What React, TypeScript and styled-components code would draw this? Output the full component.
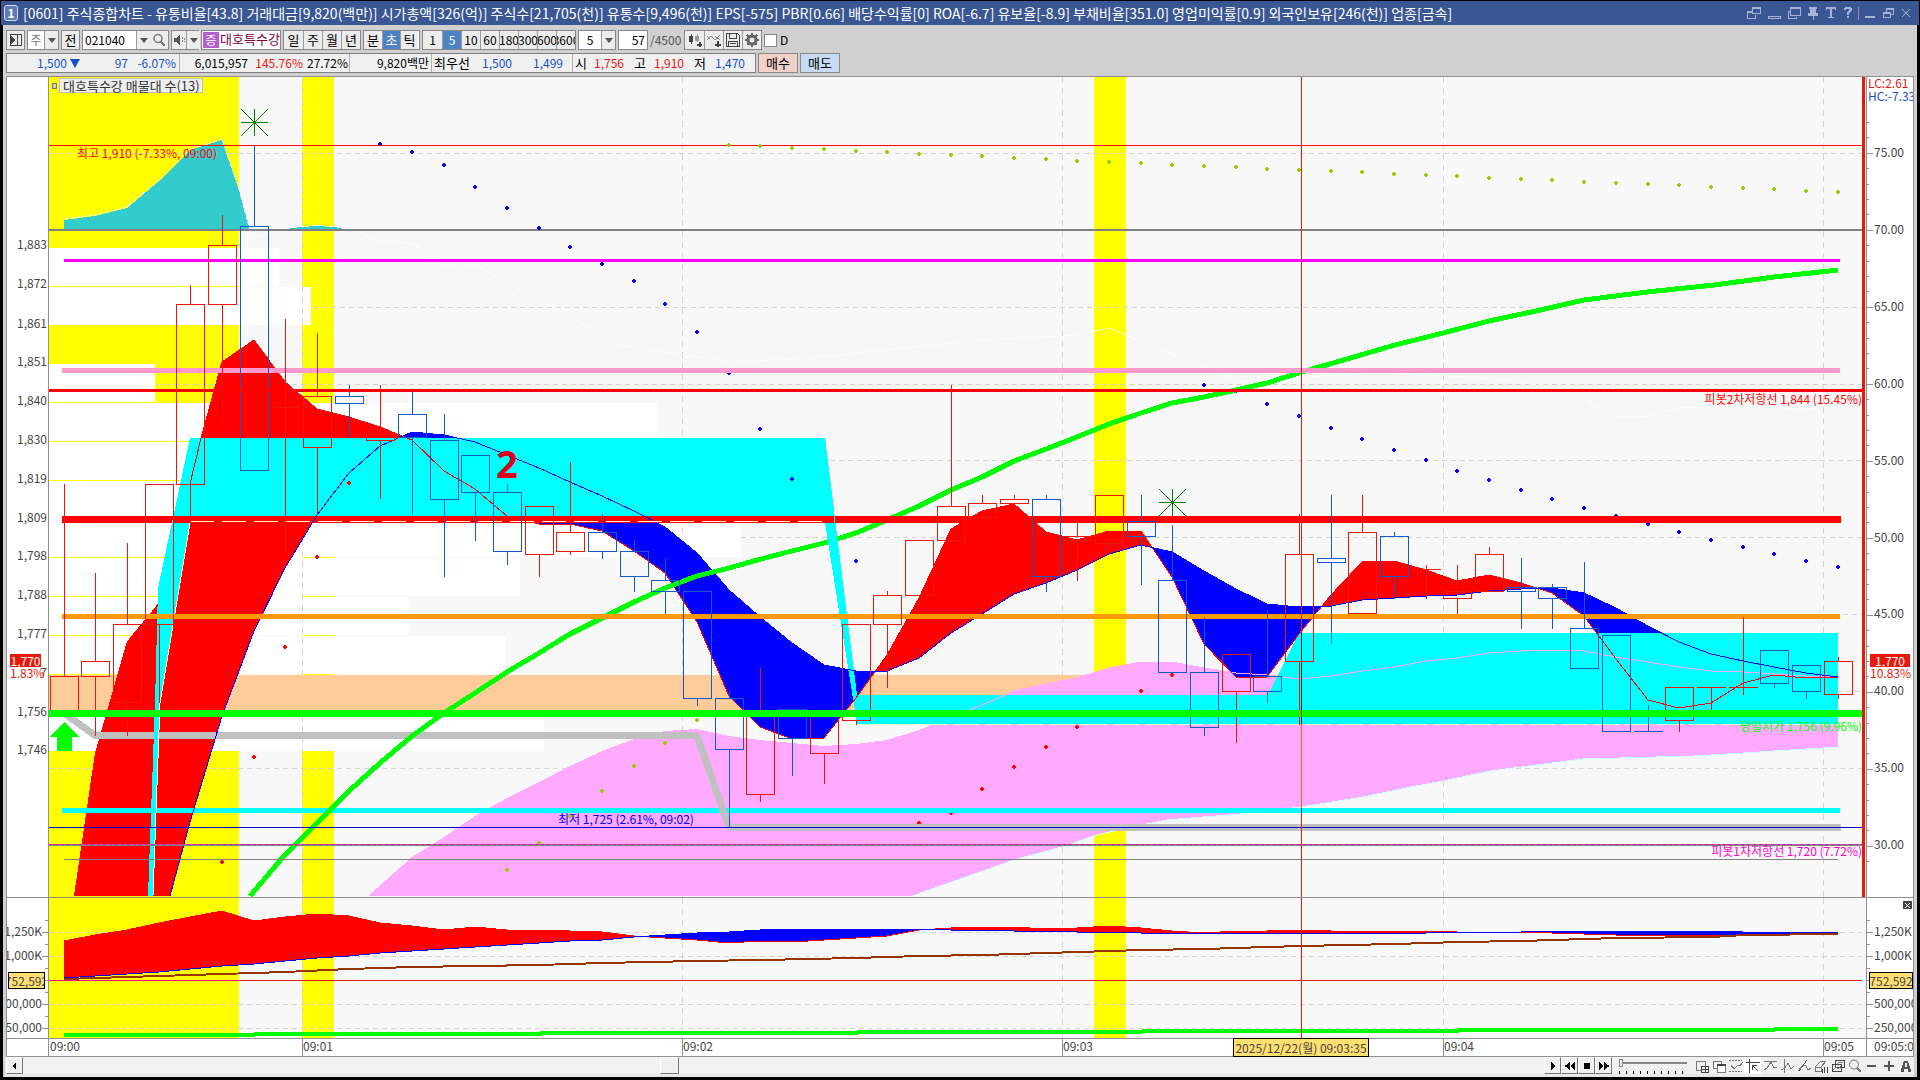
import React from "react";
import styled, { createGlobalStyle, css } from "styled-components";

const FONT = `"Noto Sans CJK KR", "Liberation Sans", sans-serif`;

const GlobalStyle = createGlobalStyle`
  *, *::before, *::after { box-sizing: border-box; }
  html, body { margin: 0; padding: 0; background: #000; }
  body, button, input, select { font-family: ${FONT}; font-size: 12px; line-height: 16px; }
`;

/* ------------------------------------------------------------------ */
/* Window                                                              */
/* ------------------------------------------------------------------ */

const Desktop = styled.div`
  display: flex;
  flex-direction: column;
  height: 100vh;
  min-height: 480px;
  padding: 1px 1px 3px;
  background: #000;
  overflow: hidden;
`;

const TitleBar = styled.header`
  display: flex;
  align-items: center;
  flex: none;
  height: 24px;
  padding: 0 5px 0 3px;
  background: #3b5793;
  color: #fff;
  white-space: nowrap;
`;

const ScreenBadge = styled.span`
  display: flex;
  align-items: center;
  justify-content: center;
  flex: none;
  width: 14px;
  height: 16px;
  margin-right: 5px;
  border: 1px solid #d3dcf0;
  border-radius: 3px;
  background: #5f79b3;
  font-weight: bold;
`;

const TitleText = styled.h1`
  flex: 1;
  margin: 0;
  overflow: hidden;
  font-size: 14px;
  font-weight: normal;
  line-height: 20px;
`;

const WindowButtons = styled.div`
  display: flex;
  align-items: center;
  gap: 2px;
  color: #a4b2d4;
`;

const WindowButton = styled.button<{ $w: number }>`
  display: flex;
  align-items: center;
  justify-content: center;
  width: ${(p) => p.$w}px;
  height: 18px;
  padding: 0;
  border: 0;
  background: none;
  color: inherit;
`;

const WindowDivider = styled.span`
  width: 1px;
  height: 13px;
  margin: 0 1px;
  background: #8891a8;
`;

const Body = styled.main`
  display: flex;
  flex-direction: column;
  flex: 1;
  min-height: 0;
  margin: 0 2px;
  padding: 5px 3px 0;
  background: #d0d0d0;
`;

/* ------------------------------------------------------------------ */
/* Toolbar                                                             */
/* ------------------------------------------------------------------ */

const Toolbar = styled.div`
  display: flex;
  flex: none;
  gap: 2px;
  height: 20px;
  white-space: nowrap;
`;

const Group = styled.div<{ $w?: number }>`
  display: flex;
  flex: none;
  width: ${(p) => (p.$w ? `${p.$w}px` : "auto")};
  border: 1px solid #888;
  background: #fff;
`;

const ToolButton = styled.button<{ $on?: boolean; $w?: number; $large?: boolean }>`
  display: flex;
  align-items: center;
  justify-content: center;
  flex: none;
  width: ${(p) => p.$w ?? 19}px;
  padding: 0;
  border: 0;
  background: ${(p) => (p.$on ? "#4d82c4" : "#ececec")};
  color: ${(p) => (p.$on ? "#fff" : "#000")};
  font-size: ${(p) => (p.$large ? 13 : 12)}px;
  overflow: hidden;
  & + & { border-left: 1px solid #999; }
`;

const Arrow = styled.span`
  display: flex;
  align-items: center;
  justify-content: center;
  flex: none;
  width: 14px;
  border-left: 1px solid #999;
  background: #ececec;
  pointer-events: none;
  &::before {
    content: "";
    border: 4px solid transparent;
    border-top: 5px solid #555;
    border-bottom: 0;
  }
`;

const Select = styled.select<{ $muted?: boolean }>`
  flex: 1;
  min-width: 0;
  padding: 0 2px;
  border: 0;
  outline: 0;
  appearance: none;
  background: transparent;
  color: ${(p) => (p.$muted ? "#777" : "#000")};
  text-align: center;
`;

const TextBox = styled.input<{ $right?: boolean }>`
  flex: 1;
  min-width: 0;
  padding: 0 2px;
  border: 0;
  outline: 0;
  background: transparent;
  color: #000;
  text-align: ${(p) => (p.$right ? "right" : "left")};
`;

const MarginMark = styled.span`
  flex: none;
  width: 16px;
  margin: 1px;
  background: #b35fd0;
  color: #fff;
  text-align: center;
`;

const StockName = styled.span`
  flex: 1;
  color: #800040;
  font-size: 13px;
  text-align: center;
`;

const Total = styled.span`
  width: 32px;
  color: #555;
  line-height: 20px;
`;

const CheckLabel = styled.label`
  display: flex;
  align-items: center;
  gap: 3px;
`;

const Check = styled.input`
  width: 13px;
  height: 13px;
  margin: 0;
  border: 1px solid #888;
  appearance: none;
  background: #fff;
  &:checked { background: #4d82c4; }
`;

/* ------------------------------------------------------------------ */
/* Quote line                                                          */
/* ------------------------------------------------------------------ */

const QuoteLine = styled.div`
  display: flex;
  flex: none;
  gap: 2px;
  height: 20px;
  margin: 3px 0;
  white-space: nowrap;
`;

const Quotes = styled.div`
  display: flex;
  border: 1px solid #808080;
  background: #f0f0f0;
`;

const QuoteCell = styled.div<{ $w: number }>`
  display: flex;
  align-items: center;
  width: ${(p) => p.$w}px;
  & + & { border-left: 1px solid #b0b0b0; }
`;

const tones = { up: "#e8180c", down: "#1450c8", flat: "#000" };

const Num = styled.span<{ $w: number; $tone?: keyof typeof tones }>`
  width: ${(p) => p.$w}px;
  color: ${(p) => tones[p.$tone ?? "flat"]};
  text-align: right;
`;

const Cap = styled.span`
  width: 40px;
  padding-left: 2px;
  font-size: 13px;
`;

const Side = styled(Cap)<{ $lead?: boolean }>`
  width: ${(p) => (p.$lead ? 14 : 22)}px;
  text-align: right;
`;

const DownMark = styled.span`
  width: 0;
  margin: 0 2px 0 3px;
  border: 5px solid transparent;
  border-top: 9px solid #1450c8;
  border-bottom: 0;
`;

const OrderButton = styled.button<{ $buy?: boolean }>`
  width: 40px;
  padding: 0;
  border: 1px solid #888;
  background: ${(p) => (p.$buy ? "#f4d0cb" : "#c5dcf2")};
  color: #000;
  font-size: 13px;
`;

/* ------------------------------------------------------------------ */
/* Chart panes                                                         */
/* ------------------------------------------------------------------ */

const ChartFrame = styled.section`
  display: grid;
  grid-template-columns: 42px minmax(0, 1fr) 47px;
  grid-template-rows: minmax(0, 821fr) minmax(0, 141fr) 18px;
  flex: 1;
  min-height: 0;
  border: solid #909090;
  border-width: 1px 1px 0;
  background: #fff;
`;

const Pane = styled.div<{ $plot?: boolean; $side?: "left" | "right" }>`
  position: relative;
  min-width: 0;
  min-height: 0;
  border-bottom: 1px solid #909090;
  background: ${(p) => (p.$plot ? "#f8f8f8" : "#fff")};
  ${(p) => p.$side === "left" && css`border-right: 1px solid #909090;`}
  ${(p) => p.$side === "right" && css`border-left: 1px solid #909090;`}
`;

const Drawing = styled.svg`
  display: block;
  width: 100%;
  height: 100%;
  font-family: ${FONT};
  font-size: 12px;
`;

const Legend = styled.div`
  position: absolute;
  top: 1px;
  left: 3px;
  display: flex;
  align-items: center;
  gap: 2px;
  color: #333;
  font-size: 13px;
  &::before {
    content: "";
    width: 5px;
    height: 6px;
    border: 1px solid #777;
    background: #ccc;
  }
  span {
    width: 144px;
    height: 15px;
    padding-left: 3px;
    border: 1px solid #c0c0c0;
    background: #efefef;
    line-height: 13px;
    white-space: nowrap;
  }
`;

const PriceTag = styled.div<{ $w: number }>`
  position: absolute;
  top: ${((654 - 77) / 820) * 100}%;
  left: 3px;
  width: ${(p) => p.$w}px;
  color: #e8180c;
  line-height: 12px;
  text-align: center;
  b {
    display: block;
    background: #e8180c;
    color: #fff;
    font-weight: normal;
    line-height: 13px;
  }
`;

const YellowTag = styled.div`
  position: absolute;
  display: flex;
  align-items: center;
  justify-content: center;
  border: 1px solid #000;
  background: #ffdf70;
  color: #444;
  white-space: nowrap;
`;

const ValueTag = styled(YellowTag)<{ $left: number; $w: number }>`
  top: ${((972 - 898) / 140) * 100}%;
  left: ${(p) => p.$left}px;
  width: ${(p) => p.$w}px;
  height: 17px;
  overflow: hidden;
`;

const TimeTag = styled(YellowTag)`
  top: -1px;
  left: ${((1233 - 49) / 1817) * 100}%;
  width: 136px;
  height: 19px;
`;

const PaneClose = styled.button`
  position: absolute;
  top: 3px;
  right: 1px;
  display: flex;
  align-items: center;
  justify-content: center;
  width: 9px;
  height: 8px;
  padding: 0;
  border: 0;
  background: #444;
  color: #fff;
`;

/* ------------------------------------------------------------------ */
/* Scroll strip                                                        */
/* ------------------------------------------------------------------ */

const BottomBar = styled.footer`
  display: flex;
  align-items: stretch;
  flex: none;
  height: 20px;
  margin-left: -1px;
  padding: 0 0 3px 1px;
  background: #e8e8e8;
`;

const Track = styled.div`
  display: flex;
  flex: 1;
  background: #f2f2f2;
`;

const Spacer = styled.span<{ $grow: number }>`
  flex: ${(p) => p.$grow} 1 0;
`;

const Raised = styled.button<{ $w?: number }>`
  display: flex;
  align-items: center;
  justify-content: center;
  flex: none;
  width: ${(p) => p.$w ?? 17}px;
  padding: 0;
  border: 1px solid;
  border-color: #fff #777 #777 #fff;
  background: #f0f0f0;
  color: #000;
`;

const SpeedBox = styled.div`
  width: 81px;
  padding: 2px 6px 0 7px;
  background: #f0f0f0;
`;

const Speed = styled.input`
  display: block;
  width: 100%;
  height: 8px;
  margin: 0;
  appearance: none;
  background: linear-gradient(#888, #888) 0 3px / 100% 2px no-repeat;
  &::-webkit-slider-thumb {
    width: 4px;
    height: 8px;
    appearance: none;
    border: 1px solid #888;
    background: #f0f0f0;
  }
`;

const SpeedTicks = styled.div`
  height: 3px;
  margin-top: 4px;
  background: repeating-linear-gradient(90deg, #000 0 1px, transparent 1px 7px);
`;

const ToolIcon = styled.button<{ $on?: boolean }>`
  display: flex;
  align-items: center;
  justify-content: center;
  flex: none;
  width: 17px;
  padding: 0;
  border: 0;
  background: ${(p) => (p.$on ? "#fff" : "#f0f0f0")};
  color: #777;
`;

/* ------------------------------------------------------------------ */
/* Series data                                                         */
/* ------------------------------------------------------------------ */

type Pt = [number, number];

const barX = (i: number) => Math.floor(64 + 31.68 * i);
const series = (from: number, ys: number[]): Pt[] => ys.map((y, k) => [barX(from + k), y]);
const str = (pts: Pt[]) => pts.map((p) => p.join(",")).join(" ");

// [r = rise / b = fall, body top, body bottom, high, low]
const candles: ["r" | "b", number, number, number, number][] = [
  ["r", 676, 712, 484, 712], ["r", 661, 676, 573, 736], ["r", 624, 702, 543, 736],
  ["r", 484, 624, 484, 703], ["r", 304, 484, 285, 522], ["r", 245, 304, 215, 422],
  ["b", 226, 470, 145, 470], ["r", 407, 407, 319, 552], ["r", 396, 447, 333, 515],
  ["b", 396, 403, 385, 438], ["r", 433, 440, 385, 499], ["b", 414, 437, 392, 515],
  ["b", 440, 499, 414, 577], ["b", 455, 492, 455, 541], ["b", 492, 551, 484, 565],
  ["r", 506, 554, 506, 577], ["r", 532, 551, 462, 555], ["b", 532, 551, 514, 559],
  ["b", 551, 576, 540, 592], ["b", 580, 591, 558, 614], ["b", 591, 698, 591, 706],
  ["b", 698, 749, 691, 827], ["r", 712, 794, 668, 802], ["b", 709, 738, 709, 776],
  ["r", 712, 753, 712, 784], ["r", 624, 720, 624, 725], ["r", 595, 624, 591, 688],
  ["r", 540, 595, 540, 595], ["r", 506, 540, 385, 540], ["r", 503, 517, 495, 552],
  ["r", 499, 503, 495, 522], ["b", 499, 576, 495, 592], ["r", 536, 540, 517, 581],
  ["r", 495, 543, 495, 552], ["b", 521, 536, 495, 585], ["b", 580, 672, 525, 672],
  ["b", 672, 727, 617, 736], ["r", 654, 691, 654, 743], ["b", 676, 691, 610, 703],
  ["r", 554, 661, 514, 725], ["b", 558, 562, 495, 644], ["r", 532, 613, 495, 613],
  ["b", 536, 576, 532, 599], ["r", 569, 569, 565, 599], ["r", 591, 598, 565, 614],
  ["r", 554, 591, 547, 591], ["b", 587, 591, 558, 629], ["b", 587, 598, 584, 629],
  ["b", 628, 668, 562, 668], ["b", 635, 731, 635, 731], ["b", 731, 731, 705, 731],
  ["r", 687, 720, 687, 732], ["r", 687, 687, 687, 710], ["r", 687, 687, 617, 695],
  ["b", 650, 683, 650, 688], ["b", 665, 691, 665, 699], ["r", 661, 694, 657, 699],
];

const fast: Pt[] = [
  [74, 896], [95, 753], [127, 641], [159, 602], [190, 484], [201, 438], [222, 362], [254, 340],
  [285, 382], [317, 409], [349, 417], [380, 427], [412, 440], [444, 471], [475, 489], [507, 516],
  [539, 524], ...series(16, [524, 531, 551, 573, 622, 696, 727, 739, 738, 698, 655, 598, 529, 511,
    504, 532, 540, 531, 531, 577, 644, 677, 677, 634, 595, 562, 561, 570, 581, 575, 583, 593, 616,
    659, 700, 708, 703, 683, 675, 678, 677]),
];

const slow: Pt[] = [
  [170, 896], [190, 822], [222, 716], [254, 631], [285, 568], [317, 515], [349, 473], [380, 446],
  [412, 432], [444, 435], [475, 442], [507, 455], [539, 468],
  ...series(16, [482, 496, 511, 527, 553, 590, 617, 643, 665, 671, 671, 658, 633, 614, 594, 583,
    570, 554, 545, 552, 571, 589, 604, 607, 606, 600, 598, 596, 595, 591, 589, 588, 593, 608, 626,
    642, 654, 661, 667, 673, 677]),
];

const pinkTop: Pt[] = [
  [368, 896], [412, 857],
  ...series(12, [837, 816, 798, 782, 766, 751, 739, 731, 729, 736, 740, 743, 746, 744, 740, 730,
    717, 705, 691, 684, 678, 668, 662, 662, 668, 673, 675, 679, 676, 671, 667, 661, 658, 653, 651,
    650, 651, 657, 662, 667, 671, 672, 674, 676, 677]),
];

const pinkBottom: Pt[] = [
  [1838, 747], [1806, 749], [1743, 753], [1693, 756], [1583, 759], [1552, 763], [1490, 771],
  [1443, 781], [1411, 787], [1363, 797], [1301, 807], [1240, 814], [1167, 820], [1126, 828],
  [1097, 835], [1062, 847], [1017, 859], [912, 896],
];

const cyanCloud: Pt[] = [
  [148, 896], [155, 703], [158, 588], [190, 438], [825, 438], [857, 695], [1268, 695], [1299, 633],
  [1838, 633], [1838, 724], [857, 724], [825, 523], [190, 523], [160, 703], [153, 896],
];

const greenCurve: Pt[] = [
  [250, 896], [283, 857], [317, 823], [349, 791], [380, 763], [412, 736], [444, 713], [475, 693],
  [507, 672], [539, 653], [570, 634], [602, 618], [634, 602], [665, 588], [697, 576], [729, 568],
  [761, 559], [792, 551], [824, 543], [856, 533], [887, 520], [919, 506], [951, 490], [982, 477],
  [1014, 461], [1046, 449], [1077, 437], [1109, 424], [1141, 413], [1172, 403], [1204, 397],
  [1236, 390], [1267, 383], [1302, 372], [1347, 359], [1395, 345], [1443, 333], [1489, 321],
  [1536, 311], [1584, 300], [1647, 292], [1714, 285], [1774, 277], [1838, 270],
];

const tealHill: Pt[] = [
  [64, 230], [64, 220], [95, 216], [127, 208], [159, 181], [190, 150], [222, 140], [239, 190], [250, 230],
];
const tealRipple: Pt[] = [[280, 230], [300, 227], [317, 226], [335, 227], [349, 230]];

const whiteDash: Pt[] = [
  [64, 219], [95, 215], [127, 207], [159, 180], [190, 149], [222, 139], [239, 189], [252, 238],
  [280, 230], [317, 225], [349, 229], [380, 241], [412, 243], [444, 266], [475, 265], [540, 300],
  [620, 345], [730, 362], [810, 358], [980, 340], [1077, 335], [1109, 328], [1150, 345],
  [1240, 382], [1380, 372], [1514, 380], [1570, 392], [1617, 416], [1649, 416], [1679, 408],
  [1775, 407], [1806, 410], [1838, 405],
];

const blueDots: Pt[] = [
  ...series(10, [144, 152, 165, 187, 208, 228, 247, 264, 281, 304, 332, 373, 429, 479]),
  [856, 561],
  ...series(36, [385, 391, 404, 416, 428, 439, 450, 460, 471, 480, 490, 499, 508, 516, 524, 532,
    540, 547, 554, 561, 567]),
];
const redDots: Pt[] = [
  ...series(5, [862, 757, 647, 557, 483]),
  ...series(27, [823, 813, 789, 767, 747, 727, 709, 691, 675]),
];
const oliveDots: Pt[] = [
  ...series(14, [870, 843, 816, 791, 766, 743, 720]),
  ...Array.from({ length: 36 }, (_, k): Pt => {
    const x = barX(21 + k);
    return [x, Math.round(x < 1109 ? 145 + ((x - 729) * 17) / 380 : 162 + ((x - 1109) * 30) / 729)];
  }),
];

// Right end of each volume-at-price band, top to bottom; 49 means no bar.
const profileEnds = [279, 311, 49, 155, 657, 800, 790, 741, 520, 409, 506, 49, 544];

const timeMarks: [number, string][] = [
  [49, "09:00"], [302, "09:01"], [682, "09:02"], [1062, "09:03"], [1443, "09:04"], [1823, "09:05"],
];

const subFast: Pt[] = [
  ...series(0, [941, 935, 930, 923, 917, 911, 921, 917, 914, 916, 923, 926, 930, 927, 930, 930, 931,
    932, 936, 938, 940, 943, 941, 942, 940, 938, 936, 930, 928, 927, 927, 929, 928, 926, 928, 931,
    933, 931, 931, 930, 931, 931, 931, 931, 932, 932, 932, 933, 934, 935, 935, 935, 935, 935, 935,
    934, 933]),
];
const subSlow: Pt[] = [
  ...series(0, [978, 976, 974, 972, 969, 966, 964, 961, 958, 956, 953, 951, 949, 947, 945, 943, 941,
    940, 937, 935, 933, 932, 930, 929, 929, 929, 929, 929, 930, 930, 931, 931, 932, 932, 933, 933,
    933, 933, 933, 933, 933, 933, 933, 933, 932, 932, 932, 931, 931, 931, 931, 931, 931, 932, 932,
    932, 932]),
];
const subBrown: Pt[] = [
  [64, 979], [159, 976], [222, 974], [285, 972], [349, 969], [412, 967], [475, 966], [539, 965],
  [602, 963], [697, 961], [762, 960], [855, 958], [920, 956], [983, 955], [1078, 952], [1142, 950],
  [1205, 949], [1267, 947], [1301, 946], [1395, 944], [1459, 942], [1521, 941], [1585, 939],
  [1618, 938], [1712, 937], [1744, 935], [1838, 934],
];
const subGreen: Pt[] = [
  [64, 1035], [254, 1035], [255, 1034], [540, 1034], [541, 1033], [857, 1033], [858, 1032],
  [1142, 1032], [1143, 1031], [1458, 1031], [1459, 1030], [1774, 1030], [1775, 1029], [1838, 1029],
];

/* ------------------------------------------------------------------ */
/* Chart drawing                                                       */
/* ------------------------------------------------------------------ */

const valueAt = (line: Pt[], x: number) => {
  for (let k = 1; k < line.length; k++) {
    if (x <= line[k][0]) {
      const [x0, y0] = line[k - 1];
      const [x1, y1] = line[k];
      return y0 + ((x - x0) / (x1 - x0)) * (y1 - y0);
    }
  }
  return line[line.length - 1][1];
};

/** Fills the space between two lines: red where `a` is above `b`, blue where it is below. */
function Ribbon({ a, b, floor }: { a: Pt[]; b: Pt[]; floor: number }) {
  const start = Math.min(a[0][0], b[0][0]);
  const end = a[a.length - 1][0];
  const yb = (x: number) => (x < b[0][0] ? floor : valueAt(b, x));
  const runs: { up: boolean; top: Pt[]; bottom: Pt[] }[] = [];
  for (let x = start; x <= end; x++) {
    const ya = valueAt(a, x);
    const ys = yb(x);
    const up = ya <= ys;
    let run = runs[runs.length - 1];
    if (!run || run.up !== up) {
      run = { up, top: [], bottom: [] };
      runs.push(run);
    }
    run.top.push([x, Math.round(ya)]);
    run.bottom.push([x, Math.round(ys)]);
  }
  return (
    <>
      {runs.map((r, k) => (
        <polygon key={k} points={str([...r.top, ...r.bottom.reverse()])} fill={r.up ? "#f00" : "#00f"} />
      ))}
    </>
  );
}

const Dots = ({ pts, color }: { pts: Pt[]; color: string }) => (
  <g fill={color}>
    {pts.map(([x, y]) => (
      <path key={`${x}-${y}`} d={`M${x - 2} ${y - 1}h1v-1h2v1h1v2h-1v1h-2v-1h-1z`} />
    ))}
  </g>
);

const Star = ({ x, y }: { x: number; y: number }) => (
  <g stroke="#008000" fill="#008000">
    <path d={`M${x - 13} ${y + 0.5}h27M${x + 0.5} ${y - 13}v27M${x - 13} ${y - 13}l27 27M${x + 14} ${y - 13}l-27 27`} />
    <rect x={x - 1} y={y - 1} width="3" height="3" stroke="none" />
  </g>
);

const Rule = ({ y, w, color, x1 = 49, x2 = 1862, dash }: {
  y: number; w: number; color: string; x1?: number; x2?: number; dash?: string;
}) => <line x1={x1} x2={x2} y1={y + 0.5} y2={y + 0.5} stroke={color} strokeWidth={w} strokeDasharray={dash} />;

const Grid = ({ rows, top, bottom }: { rows: number[]; top: number; bottom: number }) => (
  <g stroke="#d4d4d4" strokeDasharray="5 4">
    {rows.map((y) => <line key={y} x1="49" x2="1862" y1={y + 0.5} y2={y + 0.5} />)}
    {timeMarks.slice(1).map(([x]) => (
      <line key={x} x1={x + 0.5} x2={x + 0.5} y1={top} y2={bottom} strokeDasharray="6 5" />
    ))}
  </g>
);

const Stripes = ({ y, h }: { y: number; h: number }) => (
  <g fill="#ff0">
    <rect x="49" y={y} width="190" height={h} />
    <rect x="302" y={y} width="32" height={h} />
    <rect x="1094" y={y} width="32" height={h} />
  </g>
);

const px = (x: number) => `${((x - 49) / 1817) * 100}%`;
const py = (y: number) => `${((y - 77) / 820) * 100}%`;
const sy = (y: number) => `${((y - 898) / 140) * 100}%`;

const MainPlot = () => (
  <Drawing role="img" aria-label="대호특수강 5초 차트">
    <svg width="100%" height="100%" viewBox="49 77 1817 820" preserveAspectRatio="none" shapeRendering="crispEdges" fill="none">
      <Stripes y={77} h={820} />
      <g fill="#fff">
        {profileEnds.map((end, k) => (
          <rect key={k} x="49" y={Math.floor(248.2 + 38.8 * k)} width={end - 49} height="38" />
        ))}
      </g>
      <Grid rows={[153, 230]} top={77} bottom={897} />
      <g stroke="#d4d4d4" strokeDasharray="5 4">
        <path d="M313 307.5H1862M157 384.5H1862M830 460.5H1862M741 537.5H1862M520 614.5H1862M550 691.5H1862M49 768.5H1862M49 845.5H1862" />
      </g>
      <rect x="49" y="675" width="1230" height="37" fill="#fc9" />
      <polyline points={str(whiteDash)} stroke="#fff" strokeDasharray="4 2" />
      <polygon points={str(tealHill)} fill="#3cc" />
      <polygon points={str(tealRipple)} fill="#3cc" />
      <polyline points={str(whiteDash.slice(0, 8))} stroke="#fff" strokeDasharray="4 2" />
      <polygon points={str([...pinkTop, ...pinkBottom])} fill="#faf" />
      <polyline points={str(pinkBottom)} stroke="#cff" />
      <Rule y={145} w={1} color="#f00" />
      <Rule y={229.5} w={2} color="#808080" />
      <Dots pts={blueDots} color="#00f" />
      <Dots pts={redDots} color="#f00" />
      <Dots pts={oliveDots} color="#9c0" />
      <polyline points={str(greenCurve)} stroke="#0f0" strokeWidth="5" strokeLinejoin="round" />
      <Ribbon a={fast} b={slow} floor={896} />
      <Rule y={810} w={5} color="#0ff" x1={62} x2={1840} />
      <polyline points="64,713 95,735.5 697,735.5 729,827.5 1841,827.5" stroke="#c0c0c0" strokeWidth="7" strokeLinejoin="bevel" />
      <polyline points={str(greenCurve.slice(0, 8))} stroke="#0f0" strokeWidth="5" strokeLinejoin="round" />
      <Rule y={519} w={7} color="#f00" x1={62} x2={1841} />
      <polygon points={str(cyanCloud)} fill="#0ff" />
      <Rule y={519} w={7} color="#f00" x1={174} x2={834} />
      <polyline points="153,896 160,703 190,523" stroke="#ffc" />
      <polyline points={str(pinkTop.slice(18))} stroke="#faf" />
      <polyline points={str(fast.slice(4))} stroke="#f00" />
      <polyline points={str(slow)} stroke="#00f" />
      <Rule y={521} w={1} color="#ffc" x1={190} x2={825} dash="24 8" />
      <Rule y={724} w={1} color="#cfc" x1={857} x2={1838} dash="26 6" />
      <Dots pts={[[792, 479]]} color="#00f" />
      <Dots pts={[[349, 483]]} color="#f00" />
      <polyline points={str(greenCurve.slice(13, 18))} stroke="#0f0" strokeWidth="5" />
      <Rule y={260} w={3} color="#f0f" x1={64} x2={1840} />
      <Rule y={370} w={5} color="#f9c" x1={62} x2={1840} />
      <Rule y={616} w={5} color="#f90" x1={62} x2={1840} />
      {candles.map(([kind, top, bottom, high, low], i) => {
        const x = barX(i);
        const c = x + 0.5;
        return (
          <path
            key={i}
            stroke={kind === "r" ? "#e8180c" : "#1459c8"}
            d={`M${c} ${high}V${top}M${c} ${bottom}V${low}` +
              (top === bottom
                ? `M${x - 14} ${top + 0.5}H${x + 15}`
                : `M${x - 13.5} ${top + 0.5}H${x + 14.5}V${bottom + 0.5}H${x - 13.5}Z`)}
          />
        );
      })}
      <Rule y={390} w={3} color="#f00" />
      <Rule y={713} w={7} color="#0f0" />
      <Rule y={827} w={1} color="#0000d0" />
      <Rule y={844.5} w={2} color="#808080" />
      <Rule y={844} w={1} color="#f0c" dash="3 3" />
      <Rule y={859} w={1} color="#808080" x1={64} x2={1838} />
      <Star x={254} y={122} />
      <Star x={1172} y={502} />
      <path d="M64.500 722l15 15H72v14H57V737H50z" fill="#0f0" />
      <path d="M1301.500 77V897" stroke="#e8180c" />
      <path d="M1301.500 633V710M1301.500 717V724M1301.500 808V813" stroke="#000" />
      <path d="M1301.500 724V808" stroke="#ff6020" />
      <rect x="1862" y="77" width="3" height="820" fill="#e8180c" />
    </svg>
    <text x={px(77)} y={py(153)} dy="5" fill="#f00">최고 1,910 (-7.33%, 09:00)</text>
    <text x={px(558)} y={py(820)} dy="4" fill="#00f">최저 1,725 (2.61%, 09:02)</text>
    <text x={px(1862)} y={py(399)} dy="5" fill="#f00" textAnchor="end">피봇2차저항선 1,844 (15.45%)</text>
    <text x={px(1862)} y={py(727)} dy="4" fill="#0f0" textAnchor="end">당일시가 1,756 (9.96%)</text>
    <text x={px(1862)} y={py(851)} dy="5" fill="#f0c" textAnchor="end">피봇1차저항선 1,720 (7.72%)</text>
    <text x={px(496)} y={py(478)} fill="#d8001c" fontFamily="'Noto Sans', sans-serif" fontWeight="bold" fontSize="38">2</text>
  </Drawing>
);

const SubPlot = () => (
  <Drawing role="img" aria-label="거래량 지표">
    <svg width="100%" height="100%" viewBox="49 898 1817 140" preserveAspectRatio="none" shapeRendering="crispEdges" fill="none">
      <Stripes y={898} h={140} />
      <Grid rows={[932, 956, 1004, 1028]} top={898} bottom={1038} />
      <Ribbon a={subFast} b={subSlow} floor={978} />
      <polyline points={str(subFast)} stroke="#f00" />
      <polyline points={str(subSlow)} stroke="#00f" />
      <polyline points={str(subBrown)} stroke="#930" strokeWidth="2" />
      <polyline points={str(subGreen)} stroke="#0f0" strokeWidth="4" />
      <Rule y={980} w={1} color="#e8180c" />
      <Rule y={980} w={1} color="#f0c" dash="4 2" x2={239} />
      <path d="M1301.500 898V1038" stroke="#e8180c" />
    </svg>
  </Drawing>
);

// The label behind the current-price tag keeps only its last digit in view.
const leftPrices: [number, string][] = [
  [244, "1,883"], [283, "1,872"], [323, "1,861"], [361, "1,851"], [400, "1,840"], [439, "1,830"],
  [478, "1,819"], [517, "1,809"], [555, "1,798"], [594, "1,788"], [633, "1,777"], [672, "7"],
  [711, "1,756"], [749, "1,746"],
];

const rightScale = ["75.00", "70.00", "65.00", "60.00", "55.00", "50.00", "45.00", "40.00", "35.00", "30.00"];
const volumeScale: [number, string][] = [[932, "1,250K"], [956, "1,000K"], [1004, "500,000"], [1028, "250,000"]];
const volumeTicks = [920, 932, 944, 956, 968, 980, 992, 1004, 1016, 1028];

const MainAxisLeft = () => (
  <Drawing>
    {leftPrices.map(([y, t]) => (
      <text key={t} x="40" y={py(y)} dy="5" textAnchor="end" fill="#444">{t}</text>
    ))}
  </Drawing>
);

const MainAxisRight = () => (
  <Drawing>
    <svg width="100%" height="100%" viewBox="0 77 46 820" preserveAspectRatio="none" shapeRendering="crispEdges" stroke="#909090">
      {Array.from({ length: 49 }, (_, k) => (
        <line key={k} x1="0" x2={k % 5 === 2 ? 6 : 2} y1={122.5 + 15.4 * k} y2={122.5 + 15.4 * k} />
      ))}
    </svg>
    {rightScale.map((t, k) => (
      <text key={t} x="7" y={py(153 + 76.9 * k)} dy="4" fill="#444">{t}</text>
    ))}
    <text x="1" y={py(84)} dy="4" fill="#e8180c">LC:2.61</text>
    <text x="1" y={py(96)} dy="5" fill="#1450c8">HC:-7.33</text>
  </Drawing>
);

const SubAxis = ({ left }: { left?: boolean }) => (
  <Drawing>
    <svg width="100%" height="100%" viewBox={`0 898 ${left ? 41 : 46} 140`} preserveAspectRatio="none" shapeRendering="crispEdges" stroke="#909090">
      {volumeTicks.map((y, k) => {
        const len = k % 2 ? 6 : 3;
        return <line key={y} x1={left ? 41 - len : 0} x2={left ? 41 : len} y1={y + 0.5} y2={y + 0.5} />;
      })}
    </svg>
    {volumeScale.map(([y, t]) => (
      <text key={t} x={left ? 35 : 7} y={sy(y)} dy="4" textAnchor={left ? "end" : "start"} fill="#444">{t}</text>
    ))}
  </Drawing>
);

const TimeAxis = () => (
  <Drawing>
    {timeMarks.map(([x, t]) => (
      <g key={t}>
        {x > 49 && <line x1={px(x + 0.5)} x2={px(x + 0.5)} y1="0" y2="100%" stroke="#909090" />}
        <text x={px(x + 1)} y="12" fill="#444">{t}</text>
      </g>
    ))}
  </Drawing>
);

/* ------------------------------------------------------------------ */
/* Icons                                                               */
/* ------------------------------------------------------------------ */

const Icon = ({ children, size = 14 }: { children: React.ReactNode; size?: number }) => (
  <svg width={size} height={size} viewBox="0 0 14 14" fill="none" stroke="currentColor" shapeRendering="crispEdges" aria-hidden="true">
    {children}
  </svg>
);

const windowIcons: [string, number, React.ReactNode][] = [
  ["새 창", 18, <><path d="M5.500 5.500H.500v7h8V9M5.500 1.500h8v6h-8z" /><path d="M0 6.500h5M5 2.500h8" /></>],
  ["숨기기", 18, <path d="M1.500 10.500h12v2h-12z" />],
  ["겹치기", 18, <><path d="M3.500 1.500h10v8h-10zM3.500 2.500h10" /><path d="M3 5.500H1.500v7h8V11" /></>],
  ["고정", 16, <path d="M3 1h8v2h-1v4h2v3H8v4H7v-4H2V7h2V3H3z" fill="currentColor" stroke="none" />],
  ["글꼴", 16, <path d="M2 1h10v3h-1V3H8v8h2v1H4v-1h2V3H3v1H2z" fill="currentColor" stroke="none" />],
  ["도움말", 14, <path d="M3 4V2h1V1h6v1h1v3h-1v1H9v1H8v2H6V6h1V5h1V3H5v1zM6 10h2v2H6z" fill="currentColor" stroke="none" />],
];

const frameIcons: [string, React.ReactNode][] = [
  ["최소화", <path d="M2 10h10v2H2z" fill="currentColor" stroke="none" />],
  ["이전 크기", <><path d="M2.500 6.500h7v5h-7zM2.500 7.500h7" /><path d="M5 6V2.500h7v6H10M5 3.500h7" /></>],
  ["닫기", <path d="M3 3l8 8M11 3l-8 8" />],
];

const chartTools: [string, React.ReactNode][] = [
  ["차트 추가", <><path d="M6.500 11.500h-5v-9h9v4" /><path d="M6.500 7.500h7v6h-7zM10 7v7M6 10.500h8" stroke="#444" /></>],
  ["차트 겹침", <><path d="M1.500 2.500h8v7h-8z" /><path d="M5.500 5.500h8v8h-8z" fill="#fff" /><path d="M5 6h9" stroke="#444" strokeWidth="2" /></>],
  ["영역 확대", <><path d="M0 1.500h13M0 12.500h13" strokeDasharray="2 1" /><path d="M2 6l3 4 4-4 2 1 3-4" /></>],
  ["십자선", <path d="M3.500 0v14M0 3.500h14M6 6l6 6M6 6v5M6 6h5" stroke="#444" />],
  ["수평선", <><path d="M1 2.500h13" /><path d="M1 11l3-2 4-6 3 6 3-1" /></>],
  ["수직선", <><path d="M4.500 0v14" /><path d="M1 11l4-2 3-5 3 6 3-3" /></>],
  ["추세선", <><path d="M2 12L10 1" stroke="#444" /><path d="M1 12l5-6 3 1 2 4 3-2" /></>],
  ["전체 지우기", <><path d="M1 8l6-6h5l-5 6v4H1zM1 8h6" /><path d="M8 10v4M10.500 8v6M13 8v6" stroke="#444" /></>],
  ["차트 저장", <><path d="M4.500 1.500h9v7h-9zM1.500 5.500h9v7h-9z" fill="#f0f0f0" stroke="#444" /><path d="M2 11l3-3 2 2 3-3M6 5l2-2 2 1 2-1" /></>],
  ["돋보기", <><circle cx="6" cy="5.500" r="4.500" shapeRendering="auto" /><path d="M9 9l4 4" strokeWidth="2" /></>],
  ["축소", <path d="M2 7h9" strokeWidth="2" stroke="#555" />],
  ["확대", <path d="M2 7h10M7 2v10" strokeWidth="2" stroke="#555" />],
  ["자동", <path d="M2 13V11L5 2h4l3 9v2H9v-3H5v3zM6 8h2V4H6z" fill="#555" stroke="none" fillRule="evenodd" />],
];

const toolbarIcons: [string, React.ReactNode][] = [
  ["봉 유형", <><path d="M1 3h4v6H1zM3 1h1v10H3z" fill="#444" stroke="none" /><path d="M7 3h4v5H7zM9 1h1v8H9z" fill="#999" stroke="none" /><path d="M11.500 9v5M9 11.500h5" stroke="#444" strokeWidth="2" /></>],
  ["지표 추가", <><path d="M0 7l4-4 4 4 5-5M0 3l3 3M8 3l5 4" stroke="#888" /><path d="M10.500 8v6M8 11.500h6" stroke="#444" strokeWidth="2" /></>],
  ["저장", <path d="M.5.5h11l2 2v11H.5zM3.500 1v4h7V1M2.500 13V8h9v5M4 10.500h6" stroke="#444" />],
  ["설정", <><circle cx="7" cy="7" r="4" stroke="#666" strokeWidth="3" shapeRendering="auto" /><path d="M7 0v3M7 11v3M0 7h3M11 7h3M2 2l2 2M10 10l2 2M12 2l-2 2M4 10l-2 2" stroke="#666" strokeWidth="2" /></>],
];

/* ------------------------------------------------------------------ */
/* Page                                                                */
/* ------------------------------------------------------------------ */

const periods = ["일", "주", "월", "년"];
const units = ["분", "초", "틱"];
const intervals = ["1", "5", "10", "60", "180", "300", "600", "3600"];

export default function App() {
  return (
    <Desktop>
      <GlobalStyle />
      <TitleBar>
        <ScreenBadge>1</ScreenBadge>
        <TitleText>
          [0601] 주식종합차트 - 유통비율[43.8] 거래대금[9,820(백만)] 시가총액[326(억)] 주식수[21,705(천)]
          유통수[9,496(천)] EPS[-575] PBR[0.66] 배당수익률[0] ROA[-6.7] 유보율[-8.9] 부채비율[351.0]
          영업미익률[0.9] 외국인보유[246(천)] 업종[금속]
        </TitleText>
        <WindowButtons>
          {windowIcons.map(([name, w, art]) => (
            <WindowButton key={name} $w={w} aria-label={name}><Icon>{art}</Icon></WindowButton>
          ))}
          <WindowDivider />
          {frameIcons.map(([name, art]) => (
            <WindowButton key={name} $w={16} aria-label={name}><Icon>{art}</Icon></WindowButton>
          ))}
        </WindowButtons>
      </TitleBar>

      <Body>
        <Toolbar>
          <Group>
            <ToolButton $w={17} aria-label="패널 접기">
              <Icon><path d="M1.500 1.500h11v11h-11zM8.500 2v10" stroke="#444" /><path d="M2 3l5 4-5 4z" fill="#444" stroke="none" /></Icon>
            </ToolButton>
          </Group>
          <Group $w={32}>
            <Select $muted aria-label="종목 구분" defaultValue="주"><option>주</option></Select>
            <Arrow />
          </Group>
          <Group><ToolButton $large $w={17}>전</ToolButton></Group>
          <Group $w={87}>
            <TextBox aria-label="종목코드" defaultValue="021040" />
            <Arrow />
            <ToolButton $w={18} aria-label="종목 검색">
              <Icon><circle cx="6" cy="5.500" r="4" stroke="#777" strokeWidth="1.500" shapeRendering="auto" /><path d="M9 9l4 4" stroke="#777" strokeWidth="2" /></Icon>
            </ToolButton>
          </Group>
          <Group $w={28}>
            <ToolButton $w={14} aria-label="소리">
              <Icon size={12}><path d="M1 5h3l4-4v12L4 9H1z" fill="#555" stroke="none" /><path d="M10.500 4v6M13 5v4" stroke="#777" strokeDasharray="2 1" /></Icon>
            </ToolButton>
            <Arrow />
          </Group>
          <Group $w={80}>
            <MarginMark>증</MarginMark>
            <StockName>대호특수강</StockName>
          </Group>
          <Group>{periods.map((p) => <ToolButton $large key={p}>{p}</ToolButton>)}</Group>
          <Group $w={57}>{units.map((u) => <ToolButton $large key={u} $on={u === "초"} $w={18}>{u}</ToolButton>)}</Group>
          <Group>{intervals.map((n) => <ToolButton key={n} $on={n === "5"}>{n}</ToolButton>)}</Group>
          <Group $w={38}>
            <Select aria-label="간격" defaultValue="5"><option>5</option></Select>
            <Arrow />
          </Group>
          <Group $w={30}><TextBox $right aria-label="표시 봉수" defaultValue="57" /></Group>
          <Total>/4500</Total>
          <Group>
            {toolbarIcons.map(([name, art]) => (
              <ToolButton key={name} aria-label={name}><Icon>{art}</Icon></ToolButton>
            ))}
          </Group>
          <CheckLabel><Check type="checkbox" />D</CheckLabel>
        </Toolbar>

        <QuoteLine>
          <Quotes>
            <QuoteCell $w={172}>
              <Num $w={60} $tone="down">1,500</Num><DownMark />
              <Num $w={46} $tone="down">97</Num><Num $w={48} $tone="down">-6.07%</Num>
            </QuoteCell>
            <QuoteCell $w={170}>
              <Num $w={68}>6,015,957</Num><Num $w={55} $tone="up">145.76%</Num><Num $w={45}>27.72%</Num>
            </QuoteCell>
            <QuoteCell $w={82}><Num $w={79}>9,820백만</Num></QuoteCell>
            <QuoteCell $w={141}>
              <Cap>최우선</Cap><Num $w={40} $tone="down">1,500</Num><Num $w={51} $tone="down">1,499</Num>
            </QuoteCell>
            <QuoteCell $w={183}>
              <Side $lead>시</Side><Num $w={37} $tone="up">1,756</Num>
              <Side>고</Side><Num $w={38} $tone="up">1,910</Num>
              <Side>저</Side><Num $w={39} $tone="down">1,470</Num>
            </QuoteCell>
          </Quotes>
          <OrderButton $buy>매수</OrderButton>
          <OrderButton>매도</OrderButton>
        </QuoteLine>

        <ChartFrame>
          <Pane $side="left">
            <MainAxisLeft />
            <PriceTag $w={31}><b>1,770</b>1.83%</PriceTag>
          </Pane>
          <Pane $plot>
            <MainPlot />
            <Legend><span>대호특수강 매물대 수(13)</span></Legend>
          </Pane>
          <Pane $side="right">
            <MainAxisRight />
            <PriceTag $w={40}><b>1,770</b>10.83%</PriceTag>
          </Pane>

          <Pane $side="left">
            <SubAxis left />
            <ValueTag $left={1} $w={37}>752,592</ValueTag>
          </Pane>
          <Pane $plot><SubPlot /></Pane>
          <Pane $side="right">
            <SubAxis />
            <ValueTag $left={2} $w={44}>752,592</ValueTag>
            <PaneClose aria-label="지표 닫기">
              <Icon size={7}><path d="M2 2l10 10M12 2L2 12" strokeWidth="2" /></Icon>
            </PaneClose>
          </Pane>

          <Pane $side="left" />
          <Pane>
            <TimeAxis />
            <TimeTag>2025/12/22(월) 09:03:35</TimeTag>
          </Pane>
          <Pane $side="right">
            <Drawing><text x="7" y="12" fill="#444">09:05:0</text></Drawing>
          </Pane>
        </ChartFrame>

        <BottomBar>
          <Raised aria-label="왼쪽으로"><Icon size={10}><path d="M9 1v12L3 7z" fill="#000" stroke="none" /></Icon></Raised>
          <Track>
            <Spacer $grow={637} />
            <Raised $w={19} aria-label="스크롤 위치" />
            <Spacer $grow={866} />
          </Track>
          <Raised aria-label="재생"><Icon size={12}><path d="M5 2v10l5-5z" fill="#000" stroke="none" /></Icon></Raised>
          <Raised aria-label="느리게"><Icon size={12}><path d="M7 2v10L1 7zM13 2v10L7 7z" fill="#000" stroke="none" /></Icon></Raised>
          <Raised aria-label="정지"><Icon size={12}><path d="M3 3h8v8H3z" fill="#000" stroke="none" /></Icon></Raised>
          <Raised aria-label="빠르게"><Icon size={12}><path d="M1 2v10l6-5zM7 2v10l6-5z" fill="#000" stroke="none" /></Icon></Raised>
          <SpeedBox>
            <Speed type="range" aria-label="재생 속도" min={0} max={10} defaultValue={0} />
            <SpeedTicks />
          </SpeedBox>
          {chartTools.map(([name, art]) => (
            <ToolIcon key={name} $on={name === "십자선"} aria-label={name}><Icon>{art}</Icon></ToolIcon>
          ))}
        </BottomBar>
      </Body>
    </Desktop>
  );
}
